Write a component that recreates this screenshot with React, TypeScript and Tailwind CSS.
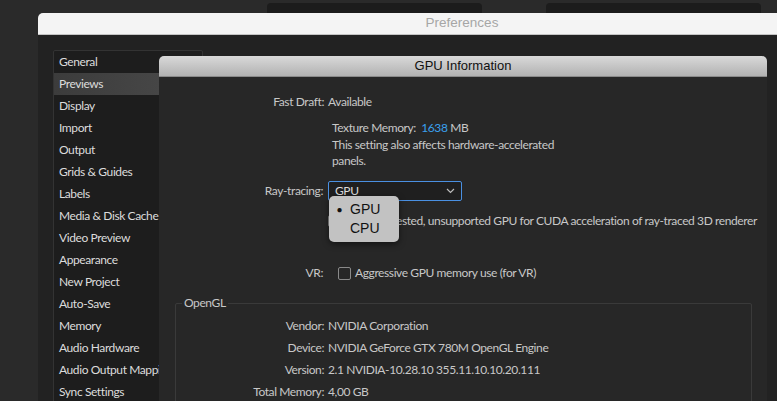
const items = [
  "General",
  "Previews",
  "Display",
  "Import",
  "Output",
  "Grids & Guides",
  "Labels",
  "Media & Disk Cache",
  "Video Preview",
  "Appearance",
  "New Project",
  "Auto-Save",
  "Memory",
  "Audio Hardware",
  "Audio Output Mapping",
  "Sync Settings",
];

const openGL = [
  ["Vendor:", "NVIDIA Corporation"],
  ["Device:", "NVIDIA GeForce GTX 780M OpenGL Engine"],
  ["Version:", "2.1 NVIDIA-10.28.10 355.11.10.10.20.111"],
  ["Total Memory:", "4,00 GB"],
];

export default function App() {
  return (
    <div className="relative w-[777px] h-[401px] overflow-hidden bg-[#2a2a2a] font-['Lato',sans-serif] text-[12px] tracking-[-0.4px]">
      {/* windows behind */}
      <div className="flex pt-[3px] pl-[267px] gap-[64px]">
        <div className="w-[215px] h-[12px] rounded-t-[4px] bg-[#1c1c1c]" />
        <div className="w-[215px] h-[12px] rounded-t-[4px] bg-[#1c1c1c]" />
      </div>

      {/* Preferences window */}
      <div className="absolute left-[38px] top-[13px] w-[848px] h-[400px] rounded-tl-[5px] bg-[#222222] overflow-hidden">
        <div className="h-[22px] bg-[#f4f4f4] border-b border-[#c4c4c4] flex items-center justify-center font-['Liberation_Sans',sans-serif] text-[13.5px] tracking-normal text-[#a6a6a6]">
          Preferences
        </div>
        <div className="pl-[15px] pt-[15px]">
          <div className="w-[150px] h-[400px] bg-[#1d1d1d] border border-[#333333] rounded-[2px]">
            {items.map((it) => (
              <div
                key={it}
                className={`h-[22px] flex items-center pl-[5px] whitespace-nowrap overflow-hidden text-[#dcdcdc] ${
                  it === "Previews" ? "bg-gradient-to-r from-[#3c3c3c] to-[#4a4a4a]" : ""
                }`}
              >
                {it}
              </div>
            ))}
          </div>
        </div>
      </div>

      {/* GPU Information dialog */}
      <div className="absolute left-[159px] top-[56px] w-[608px] h-[360px] rounded-t-[5px] bg-[#272727] overflow-hidden text-[#c8c8c8]">
        <div className="h-[21px] bg-gradient-to-b from-[#d9d9d9] to-[#b2b2b2] border-b border-[#8a8a8a] flex items-center justify-center font-['Liberation_Sans',sans-serif] text-[13px] tracking-normal text-[#111111]">
          GPU Information
        </div>

        <div className="pt-[17px]">
          <div className="flex h-[16px] items-center">
            <div className="w-[169px] text-right pr-[4px]">Fast Draft:</div>
            <div>Available</div>
          </div>

          <div className="pl-[173px] pt-[10px] leading-[16px]">
            <div className="h-[16px]">
              Texture Memory:&nbsp; <span className="text-[#3aa0ee]">1638</span> MB
            </div>
            <div className="mt-[1px]">This setting also affects hardware-accelerated</div>
            <div>panels.</div>
          </div>

          <div className="flex items-center mt-[12px] h-[20px]">
            <div className="w-[169px] text-right pr-[5px]">Ray-tracing:</div>
            <div className="w-[134px] h-[20px] border border-[#4a90e2] rounded-[2px] bg-[#1f1f1f] flex items-center justify-between pl-[6px] pr-[6px] text-[#dcdcdc]">
              <span>GPU</span>
              <svg width="9" height="6" viewBox="0 0 9 6" fill="none" stroke="#bbbbbb" strokeWidth="1.2">
                <path d="M1 1l3.5 3.5L8 1" />
              </svg>
            </div>
          </div>

          <div className="flex items-center mt-[12px] h-[16px] pl-[169px]">
            <div className="w-[12px] h-[12px] border border-[#8a8a8a] rounded-[2px] mr-[4px]" />
            <div className="whitespace-nowrap">Enable untested, unsupported GPU for CUDA acceleration of ray-traced 3D renderer</div>
          </div>

          <div className="flex items-center mt-[36px] h-[16px]">
            <div className="w-[169px] text-right pr-[5px]">VR:</div>
            <div className="w-[13px] h-[13px] border border-[#8a8a8a] rounded-[2px] ml-[10px] mr-[4px]" />
            <div>Aggressive GPU memory use (for VR)</div>
          </div>

          <div className="relative mt-[22px] ml-[16px] w-[577px] h-[120px] border border-[#3a3a3a] rounded-[2px] pt-[11px]">
            <div className="absolute left-[6px] -top-[9px] px-[2px] bg-[#272727] leading-[16px]">OpenGL</div>
            {openGL.map(([k, v]) => (
              <div key={k} className="flex h-[22px] items-center">
                <div className="w-[152px] text-right pr-[4px]">{k}</div>
                <div className="whitespace-nowrap">{v}</div>
              </div>
            ))}
          </div>
        </div>

        {/* open select menu */}
        <div className="absolute left-[170px] top-[140px] w-[70px] h-[46px] rounded-[5px] bg-[#c2c2c2] shadow-[0_2px_6px_rgba(0,0,0,0.5)] pt-[4px] font-['Liberation_Sans',sans-serif] text-[14px] tracking-normal text-[#111111] leading-[19px]">
          <div className="flex items-center">
            <span className="w-[21px] text-center text-[10px]">●</span>
            <span>GPU</span>
          </div>
          <div className="pl-[21px]">CPU</div>
        </div>
      </div>
    </div>
  );
}
